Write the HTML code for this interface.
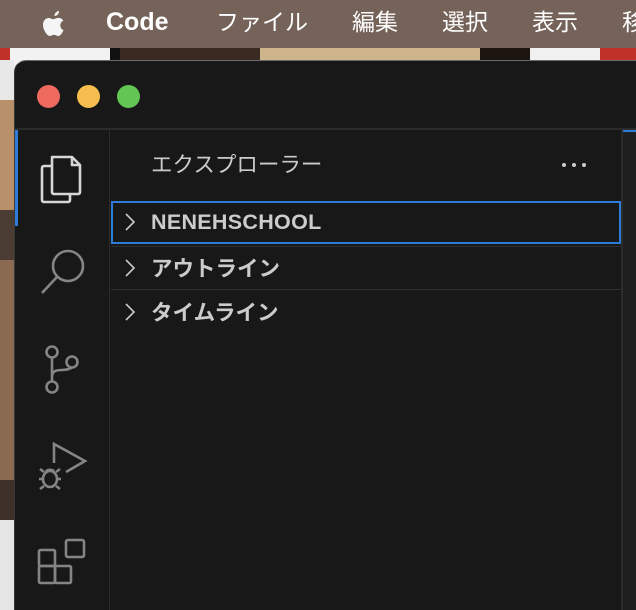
<!DOCTYPE html>
<html><head><meta charset="utf-8"><style>
*{margin:0;padding:0;box-sizing:border-box}
html,body{width:636px;height:610px;overflow:hidden}
body{background:#c9b8a0;position:relative;font-family:"Liberation Sans","Noto Sans CJK JP",sans-serif}
.menubar{position:absolute;left:0;top:0;width:636px;height:48px;background:#75635a;color:#fff;font-size:23px}
.menubar span{position:absolute;top:7px;line-height:30px}
.strip{position:absolute;left:0;top:48px;width:636px;height:562px;background:linear-gradient(90deg,#c0312a 0 10px,#f2f2f2 10px 110px,#111 110px 120px,#3a2a22 120px 260px,#cdb48a 260px 480px,#1d1510 480px 530px,#f0f0f0 530px 600px,#c0312a 600px)}
.leftstrip{position:absolute;left:0;top:60px;width:14px;height:550px;background:linear-gradient(180deg,#e8e8e8 0 40px,#b8916a 40px 150px,#4a3b33 150px 200px,#8a6a50 200px 420px,#3c3028 420px 460px,#e6e6e6 460px)}
.win{position:absolute;left:14px;top:60px;width:640px;height:560px;background:#181818;border-top-left-radius:12px;border-top:1px solid #6a6a6a;border-left:1px solid #3a3a3a}
.dot{position:absolute;top:24px;width:23px;height:23px;border-radius:50%}
.tb{position:absolute;left:0;top:67px;width:640px;height:2px;background:#2b2b2b}
.act{position:absolute;left:0;top:69px;width:95px;height:500px;background:#181818;border-right:1px solid #2b2b2b}
.ind{position:absolute;left:0;top:0;width:3px;height:96px;background:#2f7bd8}
.side{position:absolute;left:96px;top:69px;width:510px;height:500px;background:#181818}
.edge{position:absolute;left:606px;top:69px;width:2px;height:500px;background:#2b2b2b}
.ed{position:absolute;left:608px;top:69px;width:40px;height:500px;background:#1f1f1f;border-top:2px solid #2f7bd8}
.title{position:absolute;left:40px;top:22px;font-size:21.5px;line-height:26px;color:#cccccc}
.dots{position:absolute;left:451px;top:33px}
.dots i{position:absolute;width:4px;height:4px;border-radius:50%;background:#ccc;top:0}
.row{position:absolute;left:0;width:510px;height:43px;color:#cccccc;font-weight:bold;font-size:21.5px;display:flex;align-items:center}
.row .t{position:absolute;left:40px}
.row svg{position:absolute;left:12px;top:12px}
.sep{position:absolute;left:0;width:510px;height:1px;background:#2f2f2f}
</style></head><body>
<div class="menubar">
<svg style="position:absolute;left:40px;top:9px" width="28" height="30" viewBox="0 0 28 30"><path fill="#f5f5f5" d="M19 2c.3 2-1.5 5-4.5 5-.3-2.3 1.8-4.8 4.5-5zM23.5 21c-1 2.5-3 6-5.2 6-1.8 0-2.3-1.1-4.3-1.1s-2.6 1.1-4.3 1.1C7.3 27 3 21.2 3 15.8 3 11.6 5.7 9 8.6 9c1.9 0 3.2 1.2 4.7 1.2 1.4 0 2.9-1.3 5-1.3 1.4 0 3.8.6 5 2.7-4.4 2.4-3.5 8.3.2 9.4z"/></svg>
<span style="left:106px;font-weight:bold;font-size:25px">Code</span>
<span style="left:216px">ファイル</span>
<span style="left:352px">編集</span>
<span style="left:442px">選択</span>
<span style="left:532px">表示</span>
<span style="left:622px">移</span>
</div>
<div class="strip"></div>
<div class="leftstrip"></div>
<div class="win">
<div class="dot" style="left:22px;background:#ee6a5f"></div>
<div class="dot" style="left:62px;background:#f5be4f"></div>
<div class="dot" style="left:102px;background:#62c554"></div>
<div class="tb"></div>
<div class="act"><div class="ind"></div>
<svg style="position:absolute;left:24px;top:24px" width="46" height="50" viewBox="0 0 46 50" fill="none" stroke="#d6d6d6" stroke-width="2.6" stroke-linejoin="round"><path d="M13 12H5a2 2 0 0 0-2 2v32a2 2 0 0 0 2 2h24a2 2 0 0 0 2-2v-6"/><path d="M13 3h20l8 8v27a2 2 0 0 1-2 2H15a2 2 0 0 1-2-2V5a2 2 0 0 1 2-2z"/><path d="M33 3v8h8"/></svg>
<svg style="position:absolute;left:24px;top:119px" width="48" height="50" viewBox="0 0 48 50" fill="none" stroke="#858585" stroke-width="2.6"><circle cx="29" cy="17" r="15"/><path d="M18 28L3 44"/></svg>
<svg style="position:absolute;left:28px;top:215px" width="40" height="50" viewBox="0 0 40 50" fill="none" stroke="#858585" stroke-width="2.6"><circle cx="9" cy="7" r="5.5"/><circle cx="9" cy="42" r="5.5"/><circle cx="29" cy="17" r="5.5"/><path d="M9 12.5v24M9 32c0-6 4-7 10-7s10-2 10-3"/></svg>
<svg style="position:absolute;left:22px;top:311px" width="52" height="50" viewBox="0 0 52 50" fill="none" stroke="#858585" stroke-width="2.6"><path d="M17 22V3l31 17-19 11"/><ellipse cx="13" cy="38" rx="7" ry="8"/><path d="M6 38H2M20 38h4M7 31l-4-3M19 31l4-3M7 45l-4 3M19 45l4 3M9 31c1-3 7-3 8 0"/></svg>
<svg style="position:absolute;left:22px;top:408px" width="50" height="50" viewBox="0 0 50 50" fill="none" stroke="#858585" stroke-width="2.6"><rect x="2" y="12" width="16" height="16" rx="1.5"/><rect x="2" y="28" width="16" height="17" rx="1.5"/><rect x="18" y="28" width="16" height="17" rx="1.5"/><rect x="29" y="2" width="18" height="17" rx="2"/></svg>
</div>
<div class="side">
<div class="title">エクスプローラー</div>
<div class="dots"><i style="left:0"></i><i style="left:10px"></i><i style="left:20px"></i></div>
<div class="row" style="top:71px;border:2px solid #2f7bd8"><svg style="left:10px;top:9px" width="14" height="20" viewBox="0 0 14 20" fill="none" stroke="#ccc" stroke-width="1.6"><path d="M3 2l8 8-8 8"/></svg><span class="t" style="left:38px;letter-spacing:0.3px">NENEHSCHOOL</span></div>
<div class="sep" style="top:116px"></div>
<div class="row" style="top:116px"><svg width="14" height="20" viewBox="0 0 14 20" fill="none" stroke="#ccc" stroke-width="1.6"><path d="M3 2l8 8-8 8"/></svg><span class="t">アウトライン</span></div>
<div class="sep" style="top:159px"></div>
<div class="row" style="top:160px"><svg width="14" height="20" viewBox="0 0 14 20" fill="none" stroke="#ccc" stroke-width="1.6"><path d="M3 2l8 8-8 8"/></svg><span class="t">タイムライン</span></div>
</div>
<div class="edge"></div>
<div class="ed"></div>
</div>
</body></html>
